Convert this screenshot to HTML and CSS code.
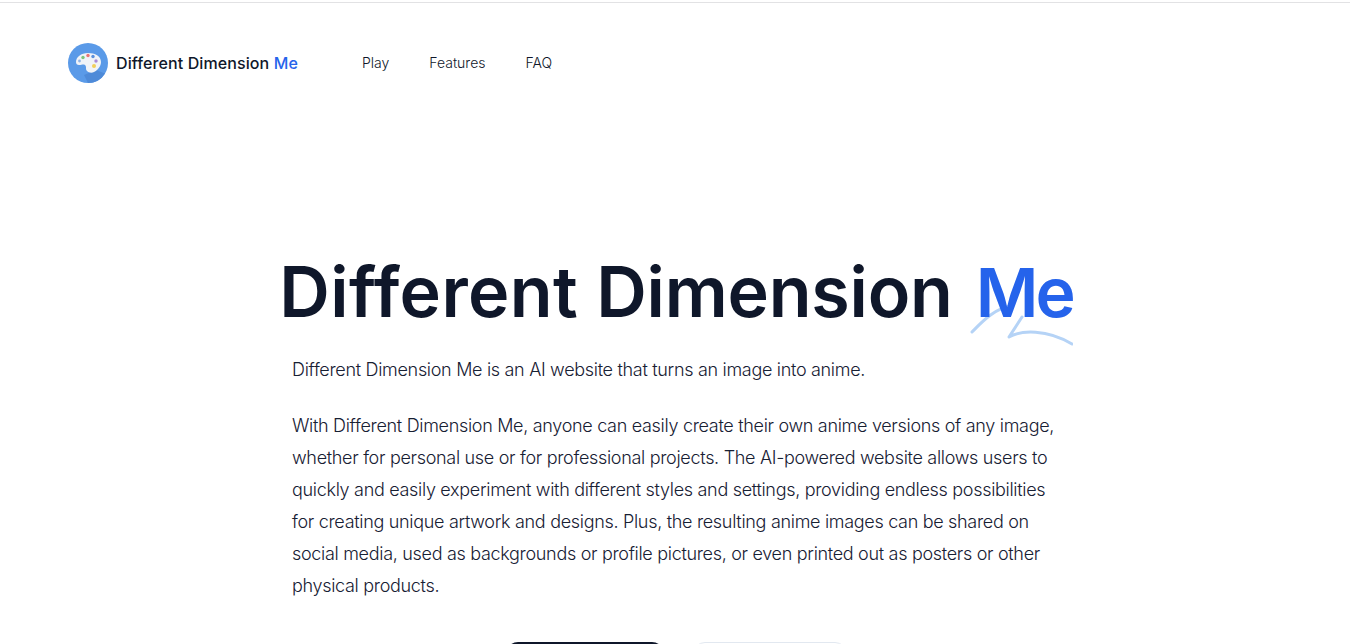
FILE: index.html
```html
<!DOCTYPE html>
<html lang="en">
<head>
<meta charset="utf-8">
<title>Different Dimension Me</title>
<link rel="stylesheet" href="styles.css">
</head>
<body>
<div class="topline"></div>
<header class="header">
  <a class="brand" href="#">
    <svg class="logo" viewBox="0 0 40 40" aria-hidden="true">
      <circle cx="20" cy="20" r="20" fill="#5a9ae8"/>
      <path d="M37 30.500 A20 20 0 0 1 20 40 L16 32 L28 27 Z" fill="#4e8ad8"/>
      <path d="M20 10c-7 0-12 4-12 9 0 2 1 3 3 3 3 0 4-1 6 0 2 2 0 4 2 6 2 2 5 2 7 1 4-2 7-6 7-10 0-6-6-9-13-9z" fill="#f0f3f8"/>
      <circle cx="15" cy="14.500" r="1.700" fill="#7cc47c"/>
      <circle cx="20" cy="12.500" r="1.700" fill="#e87474"/>
      <circle cx="25" cy="13.500" r="1.700" fill="#5a90dc"/>
      <circle cx="28" cy="18" r="1.700" fill="#a98ad8"/>
      <circle cx="26" cy="23" r="2" fill="#f0cf5a"/>
      <circle cx="11.500" cy="18" r="1.400" fill="#8fb4e6"/>
    </svg>
    <span class="brand-text">Different Dimension <span class="accent">Me</span></span>
  </a>
  <nav class="nav">
    <a href="#">Play</a>
    <a href="#">Features</a>
    <a href="#">FAQ</a>
  </nav>
</header>
<main class="hero">
  <h1 class="title">Different <span class="dim">Dimension</span> <span class="me">Me<svg class="swoosh" viewBox="0 0 104 48" aria-hidden="true"><path d="M3 34C10 27 26 9 43 8M53 19L40 39C52 32 78 31 103 46" fill="none" stroke="#b5d3f6" stroke-width="3" stroke-linecap="round" stroke-linejoin="round"/></svg></span></h1>
  <div class="copy">
    <p>Different Dimension Me is an AI website that turns an image into anime.</p>
    <p>With Different Dimension Me, anyone can easily create their own anime versions of any image, whether for personal use or for professional projects. The AI-powered website allows users to quickly and easily experiment with different styles and settings, providing endless possibilities for creating unique artwork and designs. Plus, the resulting anime images can be shared on social media, used as backgrounds or profile pictures, or even printed out as posters or other physical products.</p>
  </div>
  <div class="actions">
    <a class="btn btn-dark" href="#" aria-label="Play"></a>
    <a class="btn btn-light" href="#" aria-label="Features"></a>
  </div>
</main>
</body>
</html>
```
FILE: styles.css
```css
html { background: #fff; }
html, body { margin: 0; padding: 0; height: 644px; overflow: hidden; }
body { font-family: Inter, "Liberation Sans", sans-serif; color: #0f172a; }
a { text-decoration: none; color: inherit; }
.topline { height: 2px; border-bottom: 1px solid #e2e2e4; }
.header { display: flex; align-items: center; padding: 39px 68px 0; height: 41px; }
.brand { display: flex; align-items: center; gap: 8px; width: 294px; font-weight: 500; font-size: 16px; letter-spacing: 0.1px; }
.logo { width: 40px; height: 40px; flex: none; }
.accent { color: #2563eb; }
.nav { display: flex; gap: 40px; font-size: 14px; font-weight: 300; color: #0f172a; }
.hero { display: flex; flex-direction: column; align-items: center; padding-top: 167px; }
.title { margin: 0; font-size: 70px; line-height: 84px; font-weight: 600; letter-spacing: 0.4px; padding-left: 2px; white-space: nowrap; font-variant-ligatures: none; }
.dim { letter-spacing: -0.2px; }
.me { position: relative; margin-left: 5px; color: #2563eb; font-size: 68px; letter-spacing: -3px; }
.swoosh { position: absolute; left: -7px; top: 47px; width: 104px; height: 48px; z-index: -1; }
.copy { width: 766px; margin-top: 20px; font-size: 18px; font-weight: 300; line-height: 32px; color: #172033; letter-spacing: -0.31px; }
.copy p { margin: 0 0 24px; }
.actions { display: flex; gap: 29px; height: 2px; overflow: hidden; margin-top: 16px; padding-left: 3px; }
.btn { display: block; height: 48px; border-radius: 12px; box-sizing: border-box; }
.btn-dark { width: 158px; background: #0f172a; }
.btn-light { width: 154px; background: #fff; border: 1px solid #e2e8f0; }
```
